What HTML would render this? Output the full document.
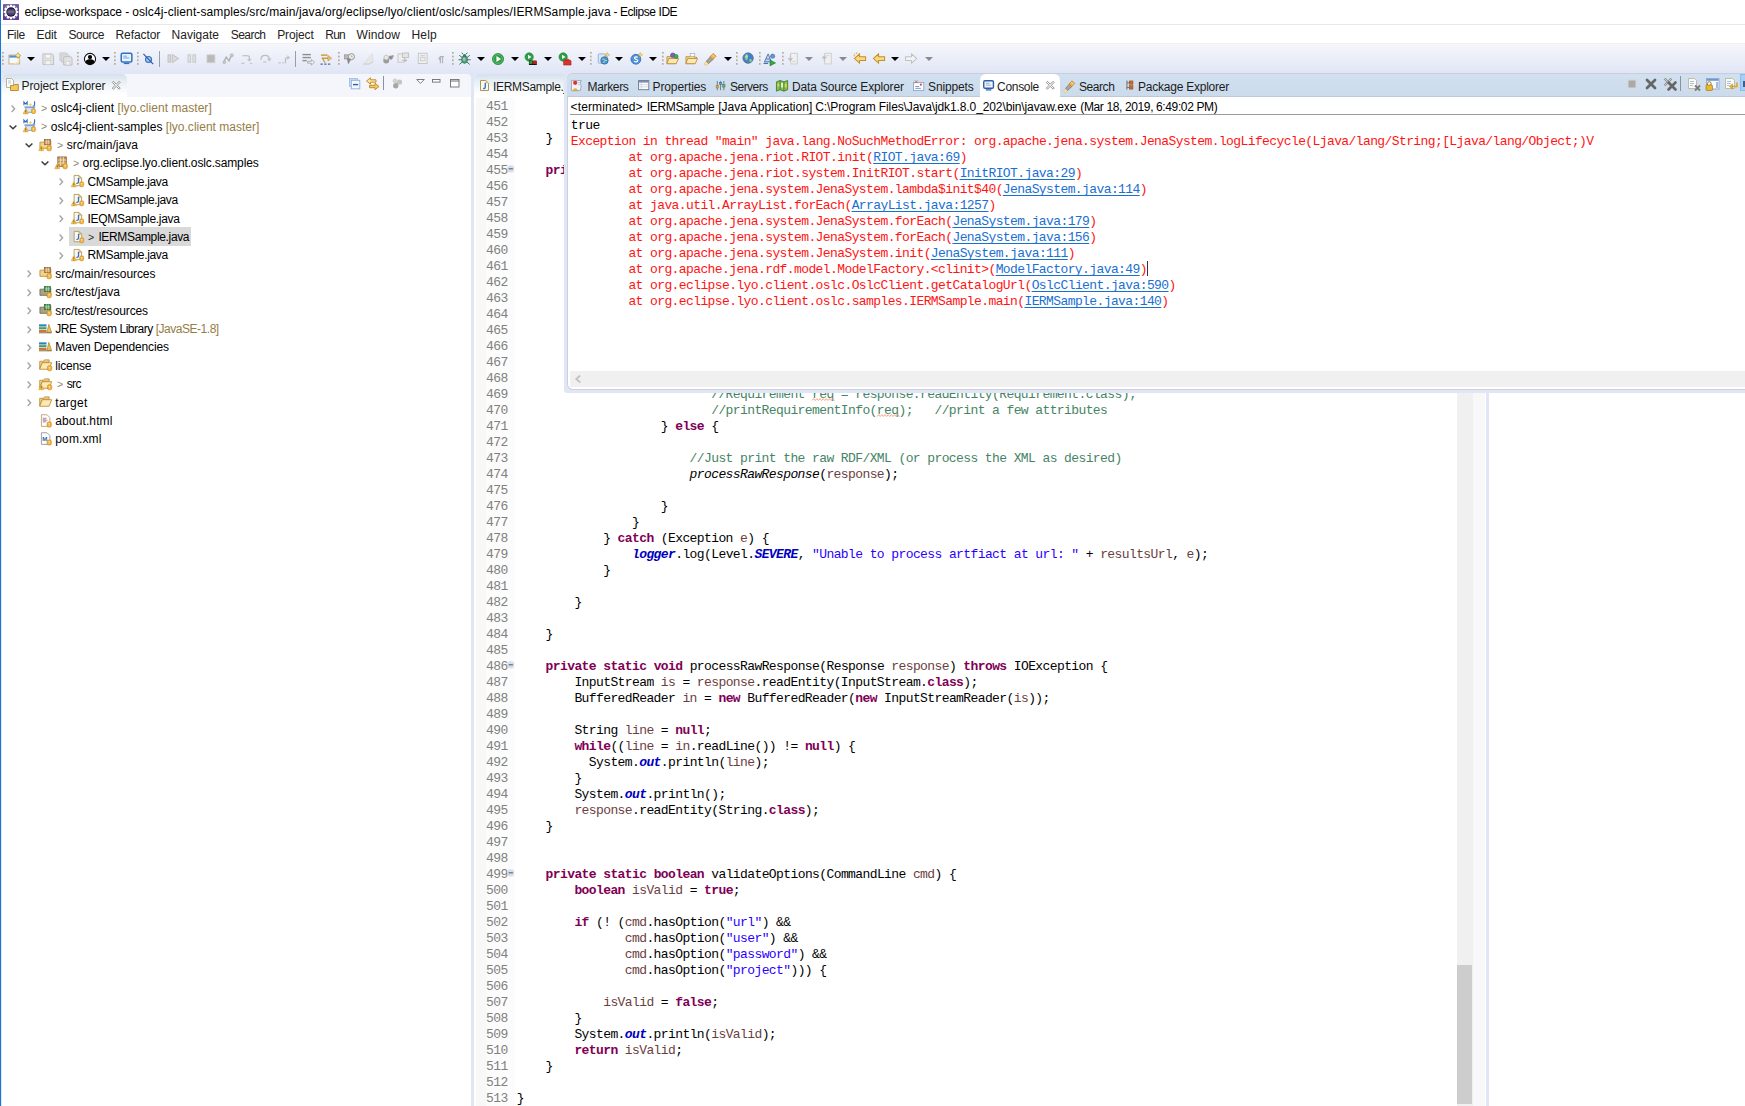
<!DOCTYPE html>
<html><head><meta charset="utf-8"><title>Eclipse IDE</title><style>
html,body{margin:0;padding:0;background:#fff;}
body{width:1745px;height:1106px;overflow:hidden;position:relative;font-family:"Liberation Sans",sans-serif;font-size:12px;color:#000;}
.abs{position:absolute;}
svg{position:absolute;overflow:visible;}
#win{position:absolute;left:0;top:0;width:1745px;height:1106px;overflow:hidden;background:#e1e6f6;}
#lborder{position:absolute;left:0;top:0;width:1px;height:1106px;background:#1677d7;}
#title{position:absolute;left:1px;top:0;width:1744px;height:24px;background:#fff;}
#title .t{position:absolute;font-size:12px;line-height:15px;white-space:pre;}
#menu{position:absolute;left:1px;top:24px;width:1744px;height:19px;background:#fff;border-top:1px solid #e8e8e8;box-sizing:border-box;}
#menu span{position:absolute;top:2.600px;color:#222;font-size:12px;line-height:15px;white-space:pre;}
#tool{position:absolute;left:1px;top:42.500px;width:1744px;height:30.500px;background:linear-gradient(#f5f7fc,#e1e6f6);border-top:1px solid #f0f0f2;box-sizing:border-box;}
.t12{position:absolute;font-size:12px;line-height:15px;white-space:pre;}
.mono{font-family:"Liberation Mono",monospace;font-size:13px;letter-spacing:-0.6px;white-space:pre;line-height:16px;}
.ln{position:absolute;height:16px;}
.kw{color:#7f0055;font-weight:bold;}
.st{color:#2a00ff;}
.cm{color:#468465;}
.lv{color:#6a3e3e;}
.sf{color:#0000c0;font-weight:bold;font-style:italic;}
.it{font-style:italic;}
.lnum{color:#808080;}
.err{color:#ff1414;}
.lk{color:#1a6fd2;text-decoration:underline;text-underline-offset:1.500px;text-decoration-skip-ink:none;text-decoration-thickness:1px;}
.dec{color:#957d47;}
.gt{color:#7b7b7b;}
.sq{text-decoration:underline wavy #e04040;text-decoration-thickness:1px;text-underline-offset:1px;}
</style></head><body>
<div id="win">
<div id="title">
<svg style="left:2px;top:4px" width="16" height="16" viewBox="0 0 16 16">
<defs><linearGradient id="eg" x1="0" y1="0" x2="0" y2="1"><stop offset="0" stop-color="#7d63a8"/><stop offset="0.55" stop-color="#5a3f8a"/><stop offset="1" stop-color="#5e3a98"/></linearGradient><linearGradient id="ec" x1="0" y1="0" x2="0" y2="1"><stop offset="0" stop-color="#2a2440"/><stop offset="0.5" stop-color="#7c7396"/><stop offset="0.62" stop-color="#5a4a86"/><stop offset="1" stop-color="#3a2d5e"/></linearGradient></defs>
<rect x="0" y="0" width="16" height="16" rx=".600" fill="url(#eg)"/>
<g fill="#fbfafc"><circle cx="8" cy="8" r="6"/><g transform="translate(8 8)"><rect x="-1.150" y="-7.300" width="2.300" height="14.600" transform="rotate(0)"/><rect x="-1.150" y="-7.300" width="2.300" height="14.600" transform="rotate(30)"/><rect x="-1.150" y="-7.300" width="2.300" height="14.600" transform="rotate(60)"/><rect x="-1.150" y="-7.300" width="2.300" height="14.600" transform="rotate(90)"/><rect x="-1.150" y="-7.300" width="2.300" height="14.600" transform="rotate(120)"/><rect x="-1.150" y="-7.300" width="2.300" height="14.600" transform="rotate(150)"/></g></g>
<circle cx="8" cy="8" r="4.700" fill="#15121f"/><circle cx="8" cy="8" r="3.800" fill="url(#ec)"/>
</svg>
<span class="t" id="ttlA" style="letter-spacing:-0.069px;left:23.4px;top:4.900px">eclipse-workspace - </span>
<span class="t" id="ttlB" style="letter-spacing:0.112px;left:131.2px;top:4.900px">oslc4j-client-samples/src/main/java/org/eclipse/lyo/client/oslc/samples/IERMSample.java</span>
<span class="t" id="ttlC" style="letter-spacing:-0.435px;left:609.6px;top:4.900px"> - Eclipse IDE</span>
</div>
<div id="menu">
<span id="m0" style="letter-spacing:-0.361px;left:5.9px">File</span>
<span id="m1" style="letter-spacing:-0.122px;left:35.5px">Edit</span>
<span id="m2" style="letter-spacing:-0.422px;left:67.4px">Source</span>
<span id="m3" style="letter-spacing:-0.082px;left:114.5px">Refactor</span>
<span id="m4" style="letter-spacing:0.003px;left:170.6px">Navigate</span>
<span id="m5" style="letter-spacing:-0.539px;left:229.7px">Search</span>
<span id="m6" style="letter-spacing:-0.137px;left:276.2px">Project</span>
<span id="m7" style="letter-spacing:-0.805px;left:324.3px">Run</span>
<span id="m8" style="letter-spacing:0.119px;left:355.6px">Window</span>
<span id="m9" style="letter-spacing:0.103px;left:410.6px">Help</span>
</div>
<div id="tool"></div>
<svg style="left:1.7px;top:52.3px" width="2" height="14" viewBox="0 0 2 14"><rect x="0" y="0.0" width="1.700" height="1.700" fill="#b0aa96"/><rect x="0.800" y="0.8" width=".900" height=".900" fill="#d8d3c2"/><rect x="0" y="3.7" width="1.700" height="1.700" fill="#b0aa96"/><rect x="0.800" y="4.5" width=".900" height=".900" fill="#d8d3c2"/><rect x="0" y="7.4" width="1.700" height="1.700" fill="#b0aa96"/><rect x="0.800" y="8.2" width=".900" height=".900" fill="#d8d3c2"/><rect x="0" y="11.1" width="1.700" height="1.700" fill="#b0aa96"/><rect x="0.800" y="11.9" width=".900" height=".900" fill="#d8d3c2"/></svg>
<svg style="left:8px;top:51.7px" width="14" height="14" viewBox="0 0 14 14"><g transform="translate(0.5 0.5) scale(0.93)"><rect x="0.500" y="2.800" width="11.500" height="9.500" fill="#f4f9fe" stroke="#c5a75e" stroke-width=".9"/><rect x="0.900" y="3.200" width="10.700" height="2.300" fill="#4f8fd6"/><path d="M6 11.800q5-.5 5.500-5" fill="none" stroke="#f6e6a8" stroke-width="1.200"/><path d="M10.200 0l1.100 2.100 2.100 1.100-2.100 1.100-1.100 2.100-1.100-2.100-2.100-1.100 2.100-1.100z" fill="#fbe69a" stroke="#c49a2c" stroke-width=".7"/></g></svg>
<svg style="left:26.7px;top:56.7px" width="8" height="4" viewBox="0 0 8 4"><path d="M0 0h8l-4 4z" fill="#000"/></svg>
<svg style="left:41px;top:51.7px" width="14" height="14" viewBox="0 0 14 14"><g transform="translate(0.5 0.5) scale(0.93)"><path d="M1.5 1.5h10l1.5 1.5v10h-11.5z" fill="#e2e2e2" stroke="#bdbdbd"/><rect x="4" y="2" width="5.5" height="4" fill="#f6f6f6" stroke="#c6c6c6" stroke-width=".6"/><rect x="4" y="8.5" width="6" height="4.5" fill="#f2f2f2" stroke="#c6c6c6" stroke-width=".6"/></g></svg>
<svg style="left:59px;top:51.7px" width="14" height="14" viewBox="0 0 14 14"><g transform="translate(0.5 0.5) scale(0.93)"><path d="M0.5 0.5h7l1 1v7h-8z" fill="#e6e6e6" stroke="#c4c4c4"/><path d="M2.5 2.5h7l1 1v7h-8z" fill="#e6e6e6" stroke="#c4c4c4"/><path d="M4.5 4.5h7.5l1.5 1.5v7.5h-9z" fill="#e2e2e2" stroke="#bdbdbd"/><rect x="7" y="9.5" width="4" height="4" fill="#f4f4f4" stroke="#c6c6c6" stroke-width=".6"/></g></svg>
<svg style="left:76.7px;top:52.3px" width="2" height="14" viewBox="0 0 2 14"><rect x="0" y="0.0" width="1.700" height="1.700" fill="#b0aa96"/><rect x="0.800" y="0.8" width=".900" height=".900" fill="#d8d3c2"/><rect x="0" y="3.7" width="1.700" height="1.700" fill="#b0aa96"/><rect x="0.800" y="4.5" width=".900" height=".900" fill="#d8d3c2"/><rect x="0" y="7.4" width="1.700" height="1.700" fill="#b0aa96"/><rect x="0.800" y="8.2" width=".900" height=".900" fill="#d8d3c2"/><rect x="0" y="11.1" width="1.700" height="1.700" fill="#b0aa96"/><rect x="0.800" y="11.9" width=".900" height=".900" fill="#d8d3c2"/></svg>
<svg style="left:83px;top:51.7px" width="14" height="14" viewBox="0 0 14 14"><g transform="translate(0.5 0.5) scale(0.93)"><circle cx="7" cy="7" r="6" fill="#fff" stroke="#111" stroke-width="1.200"/><circle cx="7" cy="4.900" r="2.300" fill="#050505"/><path d="M2 10.300C2.800 7.700 5 7.300 7 7.300S11.200 7.700 12 10.300A6 6 0 0 1 2 10.300z" fill="#050505"/></g></svg>
<svg style="left:101.7px;top:56.7px" width="8" height="4" viewBox="0 0 8 4"><path d="M0 0h8l-4 4z" fill="#000"/></svg>
<svg style="left:113.7px;top:52.3px" width="2" height="14" viewBox="0 0 2 14"><rect x="0" y="0.0" width="1.700" height="1.700" fill="#b0aa96"/><rect x="0.800" y="0.8" width=".900" height=".900" fill="#d8d3c2"/><rect x="0" y="3.7" width="1.700" height="1.700" fill="#b0aa96"/><rect x="0.800" y="4.5" width=".900" height=".900" fill="#d8d3c2"/><rect x="0" y="7.4" width="1.700" height="1.700" fill="#b0aa96"/><rect x="0.800" y="8.2" width=".900" height=".900" fill="#d8d3c2"/><rect x="0" y="11.1" width="1.700" height="1.700" fill="#b0aa96"/><rect x="0.800" y="11.9" width=".900" height=".900" fill="#d8d3c2"/></svg>
<svg style="left:120px;top:51.7px" width="14" height="14" viewBox="0 0 14 14"><g transform="translate(0.5 0.5) scale(0.93)"><rect x="0.8" y="0.8" width="11.4" height="9.4" rx="1.4" fill="#eaf2fb" stroke="#2f6fc1" stroke-width="1.6"/><rect x="3" y="3.4" width="4" height="1" fill="#6f9bd4"/><rect x="3" y="5.4" width="6.5" height="1" fill="#6f9bd4"/><rect x="3.5" y="11.2" width="6" height="1.3" fill="#2f6fc1"/></g></svg>
<svg style="left:136.7px;top:52.3px" width="2" height="14" viewBox="0 0 2 14"><rect x="0" y="0.0" width="1.700" height="1.700" fill="#b0aa96"/><rect x="0.800" y="0.8" width=".900" height=".900" fill="#d8d3c2"/><rect x="0" y="3.7" width="1.700" height="1.700" fill="#b0aa96"/><rect x="0.800" y="4.5" width=".900" height=".900" fill="#d8d3c2"/><rect x="0" y="7.4" width="1.700" height="1.700" fill="#b0aa96"/><rect x="0.800" y="8.2" width=".900" height=".900" fill="#d8d3c2"/><rect x="0" y="11.1" width="1.700" height="1.700" fill="#b0aa96"/><rect x="0.800" y="11.9" width=".900" height=".900" fill="#d8d3c2"/></svg>
<svg style="left:142px;top:51.7px" width="14" height="14" viewBox="0 0 14 14"><g transform="translate(0.5 0.5) scale(0.93)"><circle cx="6.5" cy="7.5" r="3.2" fill="#aecbee" stroke="#3a74c4" stroke-width="1.3"/><path d="M1 1.5l10.5 11" stroke="#3560b0" stroke-width="1.4"/></g></svg>
<div class="abs" style="left:159px;top:51px;width:1px;height:16px;background:#9b9da3"></div>
<svg style="left:167px;top:51.7px" width="14" height="14" viewBox="0 0 14 14"><g transform="translate(0.5 0.5) scale(0.93)"><rect x="0.5" y="2.5" width="2.6" height="8" fill="#d6d6d6" stroke="#bdbdbd" stroke-width=".8"/><path d="M5 2l7 4.500-7 4.500z" fill="#dcdcdc" stroke="#b8b8b8" stroke-width=".9"/></g></svg>
<svg style="left:187px;top:51.7px" width="14" height="14" viewBox="0 0 14 14"><g transform="translate(0.5 0.5) scale(0.93)"><rect x="0.5" y="2.5" width="3" height="8" fill="#e0e0e0" stroke="#c0c0c0" stroke-width=".8"/><rect x="5.800" y="2.5" width="3" height="8" fill="#e0e0e0" stroke="#c0c0c0" stroke-width=".8"/></g></svg>
<svg style="left:206px;top:51.7px" width="14" height="14" viewBox="0 0 14 14"><g transform="translate(0.5 0.5) scale(0.93)"><rect x="0.5" y="2.5" width="8.5" height="8.5" fill="#b9b9b9" stroke="#d0d0d0" stroke-width="1"/></g></svg>
<svg style="left:222px;top:51.7px" width="14" height="14" viewBox="0 0 14 14"><g transform="translate(0.5 0.5) scale(0.93)"><path d="M1 11l3-6 3 4 3-7" fill="none" stroke="#b0b0b0" stroke-width="1.5"/><circle cx="10" cy="3" r="1.700" fill="#c9c9c9" stroke="#a8a8a8" stroke-width=".6"/><circle cx="2" cy="10.5" r="1.5" fill="#c9c9c9" stroke="#a8a8a8" stroke-width=".6"/></g></svg>
<svg style="left:241px;top:51.7px" width="14" height="14" viewBox="0 0 14 14"><g transform="translate(0.5 0.5) scale(0.93)"><path d="M1 3.500h5.500q2 0 2 2v2" fill="none" stroke="#b7b7b7" stroke-width="1.3"/><path d="M6 7l2.500 3 2.500-3z" fill="#c4c4c4"/><rect x="0" y="11" width="3" height="1.200" fill="#bdbdbd"/><rect x="9" y="11.200" width="2.500" height="1.200" fill="#c8c8c8"/></g></svg>
<svg style="left:259px;top:51.7px" width="14" height="14" viewBox="0 0 14 14"><g transform="translate(0.5 0.5) scale(0.93)"><path d="M1.500 8q0-5 4.500-5t4.500 4" fill="none" stroke="#bcbcbc" stroke-width="1.300"/><path d="M8 6.500l2.600 3.200 2.400-3.200z" fill="#c4c4c4"/><rect x="4" y="9.500" width="3.500" height="1.400" fill="#c6c6c6"/></g></svg>
<svg style="left:278px;top:51.7px" width="14" height="14" viewBox="0 0 14 14"><g transform="translate(0.5 0.5) scale(0.93)"><rect x="0" y="10.500" width="2.500" height="1.300" fill="#c3c3c3"/><rect x="4" y="10.500" width="2" height="1.300" fill="#c9c9c9"/><path d="M7.500 11.500v-4q0-2 2-2h1" fill="none" stroke="#bcbcbc" stroke-width="1.300"/><path d="M9.500 3l3 2.500-3 2.500z" fill="#c4c4c4"/></g></svg>
<div class="abs" style="left:295px;top:51px;width:1px;height:16px;background:#9b9da3"></div>
<svg style="left:302px;top:51.7px" width="14" height="14" viewBox="0 0 14 14"><g transform="translate(0.5 0.5) scale(0.93)"><rect x="0" y="1.500" width="9" height="1.500" fill="#8e8e8e"/><rect x="0" y="4.700" width="9" height="1.500" fill="#8e8e8e"/><rect x="0" y="8" width="4.500" height="1.500" fill="#8e8e8e"/><path d="M5.500 9.500h4v-2l3.500 3-3.500 3v-2h-4z" fill="#f4f4f4" stroke="#9a9a9a" stroke-width=".8"/></g></svg>
<svg style="left:320px;top:51.7px" width="14" height="14" viewBox="0 0 14 14"><g transform="translate(0.5 0.5) scale(0.93)"><path d="M0.500 2.800h7" stroke="#c69a36" stroke-width="1.500"/><path d="M2 6.200h7" stroke="#c69a36" stroke-width="1.500"/><path d="M8 3.200l4 3-4 3z" fill="#f0c95f" stroke="#b98a27" stroke-width=".6"/><path d="M1.500 5.500l3.500 5.500" stroke="#c69a36" stroke-width="1.300"/><path d="M0 12.500h2.500M4 12.500h2.500M8 12.500h2.500" stroke="#3b6fb8" stroke-width="1.300"/></g></svg>
<svg style="left:337.7px;top:52.3px" width="2" height="14" viewBox="0 0 2 14"><rect x="0" y="0.0" width="1.700" height="1.700" fill="#b0aa96"/><rect x="0.800" y="0.8" width=".900" height=".900" fill="#d8d3c2"/><rect x="0" y="3.7" width="1.700" height="1.700" fill="#b0aa96"/><rect x="0.800" y="4.5" width=".900" height=".900" fill="#d8d3c2"/><rect x="0" y="7.4" width="1.700" height="1.700" fill="#b0aa96"/><rect x="0.800" y="8.2" width=".900" height=".900" fill="#d8d3c2"/><rect x="0" y="11.1" width="1.700" height="1.700" fill="#b0aa96"/><rect x="0.800" y="11.9" width=".900" height=".900" fill="#d8d3c2"/></svg>
<svg style="left:343px;top:51.7px" width="14" height="14" viewBox="0 0 14 14"><g transform="translate(0.5 0.5) scale(0.93)"><rect x="1" y="2.500" width="5" height="4.500" fill="#b9b9b9" stroke="#8f8f8f" stroke-width=".7"/><circle cx="8.500" cy="4.500" r="3.300" fill="#ececec" stroke="#8f8f8f" stroke-width="1"/><path d="M8.500 3v1.700h1.500" stroke="#9a9a9a" stroke-width=".7" fill="none"/><path d="M3.500 6l5 1-3.500 6z" fill="#8a8a8a"/></g></svg>
<svg style="left:362px;top:51.7px" width="14" height="14" viewBox="0 0 14 14"><g transform="translate(0.5 0.5) scale(0.93)"><path d="M1 12.500l9.500-11.500 1 9-4.500 2.500z" fill="#e6e6e6" stroke="#d6d6d6" stroke-width=".6"/><path d="M1 12.500l6 0 4.500-2.500" fill="none" stroke="#c9c9c9" stroke-width=".8"/></g></svg>
<svg style="left:382px;top:51.7px" width="14" height="14" viewBox="0 0 14 14"><g transform="translate(0.5 0.5) scale(0.93)"><circle cx="4" cy="8.500" r="3.200" fill="#9c9c9c"/><circle cx="4" cy="5.500" r="2.500" fill="#e8e8e8" stroke="#a8a8a8" stroke-width=".6"/><circle cx="9" cy="5.500" r="2.200" fill="#8f8f8f"/><circle cx="11" cy="4" r="1.200" fill="#a5a5a5"/></g></svg>
<svg style="left:397px;top:51.7px" width="14" height="14" viewBox="0 0 14 14"><g transform="translate(0.5 0.5) scale(0.93)"><rect x="0.500" y="1.500" width="7" height="9" fill="#ececec" stroke="#c2c2c2" stroke-width=".9"/><rect x="5.500" y="0.500" width="6.500" height="5" fill="#e3e3e3" stroke="#bdbdbd" stroke-width=".9"/><path d="M5 8.500h5l-1.500-1.500m1.500 1.500l-1.500 1.500" stroke="#b5b5b5" fill="none" stroke-width="1"/></g></svg>
<svg style="left:417px;top:51.7px" width="14" height="14" viewBox="0 0 14 14"><g transform="translate(0.5 0.5) scale(0.93)"><rect x="0.800" y="0.800" width="9.500" height="11" fill="#efefef" stroke="#c4c4c4" stroke-width="1"/><rect x="3" y="3" width="5" height="1" fill="#c8c8c8"/><rect x="3" y="5.300" width="5" height="3.500" fill="none" stroke="#c8c8c8" stroke-width=".8"/></g></svg>
<svg style="left:436px;top:51.7px" width="14" height="14" viewBox="0 0 14 14"><g transform="translate(0.5 0.5) scale(0.93)"><path d="M6.500 4.500v7M4.200 4.500v7M8 4.500h-4.500" fill="none" stroke="#b4b4b4" stroke-width="1.300"/><path d="M4.200 4.500a2 2 0 000 4z" fill="#b4b4b4"/></g></svg>
<svg style="left:451.7px;top:52.3px" width="2" height="14" viewBox="0 0 2 14"><rect x="0" y="0.0" width="1.700" height="1.700" fill="#b0aa96"/><rect x="0.800" y="0.8" width=".900" height=".900" fill="#d8d3c2"/><rect x="0" y="3.7" width="1.700" height="1.700" fill="#b0aa96"/><rect x="0.800" y="4.5" width=".900" height=".900" fill="#d8d3c2"/><rect x="0" y="7.4" width="1.700" height="1.700" fill="#b0aa96"/><rect x="0.800" y="8.2" width=".900" height=".900" fill="#d8d3c2"/><rect x="0" y="11.1" width="1.700" height="1.700" fill="#b0aa96"/><rect x="0.800" y="11.9" width=".900" height=".900" fill="#d8d3c2"/></svg>
<svg style="left:458px;top:51.7px" width="14" height="14" viewBox="0 0 14 14"><g transform="translate(0.5 0.5) scale(0.93)"><path d="M3.800 5.300l-3-2.300M3.500 7.800h-3.500M3.900 10.300l-2.900 2.500M9.200 5.300l3-2.300M9.500 7.800h3.500M9.100 10.300l2.900 2.500M5 2l-1.500-1.800M8 2l1.500-1.800" stroke="#2d6b58" stroke-width="1" fill="none"/><ellipse cx="6.500" cy="7.600" rx="3.100" ry="4" fill="#5aa585" stroke="#2d6b58" stroke-width=".9"/><ellipse cx="6" cy="7" rx="1.400" ry="2" fill="#a8d8b8" opacity=".8"/><circle cx="6.500" cy="3.300" r="1.700" fill="#3a7c66"/></g></svg>
<svg style="left:476.7px;top:56.7px" width="8" height="4" viewBox="0 0 8 4"><path d="M0 0h8l-4 4z" fill="#000"/></svg>
<svg style="left:491px;top:51.7px" width="14" height="14" viewBox="0 0 14 14"><g transform="translate(0.5 0.5) scale(0.93)"><circle cx="7" cy="7" r="6" fill="#2f9f46" stroke="#1d7a31" stroke-width=".7"/><circle cx="7" cy="7" r="4.800" fill="none" stroke="#7ad38a" stroke-width=".8" opacity=".7"/><path d="M5.300 3.800l5 3.200-5 3.200z" fill="#fff"/></g></svg>
<svg style="left:510.7px;top:56.7px" width="8" height="4" viewBox="0 0 8 4"><path d="M0 0h8l-4 4z" fill="#000"/></svg>
<svg style="left:524px;top:51.7px" width="14" height="14" viewBox="0 0 14 14"><g transform="translate(0.5 0.5) scale(0.93)"><circle cx="5" cy="4.800" r="4.500" fill="#2c9e44" stroke="#1d7a31" stroke-width=".6"/><path d="M3.800 2.500l3.700 2.300-3.700 2.300z" fill="#fff"/><rect x="5" y="9" width="4" height="3.500" fill="#2fa23c" stroke="#111" stroke-width=".5"/><rect x="9" y="9" width="4" height="3.500" fill="#d6201f" stroke="#111" stroke-width=".5"/><rect x="4.800" y="12.300" width="8.400" height="1.100" fill="#111"/></g></svg>
<svg style="left:543.7px;top:56.7px" width="8" height="4" viewBox="0 0 8 4"><path d="M0 0h8l-4 4z" fill="#000"/></svg>
<svg style="left:558px;top:51.7px" width="14" height="14" viewBox="0 0 14 14"><g transform="translate(0.5 0.5) scale(0.93)"><circle cx="5" cy="4.800" r="4.500" fill="#2c9e44" stroke="#1d7a31" stroke-width=".6"/><path d="M3.800 2.500l3.700 2.300-3.700 2.300z" fill="#fff"/><path d="M6.500 8h6l1 1.200v4.300h-8v-4.300z" fill="#d9332e" stroke="#a31e1a" stroke-width=".6"/><rect x="8.300" y="7" width="2.600" height="1.400" fill="#e65a50" stroke="#a31e1a" stroke-width=".5"/></g></svg>
<svg style="left:577.7px;top:56.7px" width="8" height="4" viewBox="0 0 8 4"><path d="M0 0h8l-4 4z" fill="#000"/></svg>
<svg style="left:589.7px;top:52.3px" width="2" height="14" viewBox="0 0 2 14"><rect x="0" y="0.0" width="1.700" height="1.700" fill="#b0aa96"/><rect x="0.800" y="0.8" width=".900" height=".900" fill="#d8d3c2"/><rect x="0" y="3.7" width="1.700" height="1.700" fill="#b0aa96"/><rect x="0.800" y="4.5" width=".900" height=".900" fill="#d8d3c2"/><rect x="0" y="7.4" width="1.700" height="1.700" fill="#b0aa96"/><rect x="0.800" y="8.2" width=".900" height=".900" fill="#d8d3c2"/><rect x="0" y="11.1" width="1.700" height="1.700" fill="#b0aa96"/><rect x="0.800" y="11.9" width=".900" height=".900" fill="#d8d3c2"/></svg>
<svg style="left:597px;top:51.7px" width="14" height="14" viewBox="0 0 14 14"><g transform="translate(0.5 0.5) scale(0.93)"><rect x="0.800" y="1.500" width="8" height="10" rx="1" fill="#dbe6f5" stroke="#8ea6cb" stroke-width=".9"/><circle cx="7.500" cy="8.500" r="4" fill="#4a8fd3" stroke="#2b5fa8" stroke-width=".7"/><path d="M5 7.500c1-1 2-.5 2.500.5s1.500 1 2.500.3M6 11c.5-1 1.500-1 2-.3" stroke="#9fe09a" stroke-width="1.100" fill="none"/><path d="M10.500 0l.8 1.700 1.700.8-1.700.8-.8 1.700-.8-1.700-1.700-.8 1.700-.8z" fill="#f8dc7a" stroke="#c49a2c" stroke-width=".5"/></g></svg>
<svg style="left:614.7px;top:56.7px" width="8" height="4" viewBox="0 0 8 4"><path d="M0 0h8l-4 4z" fill="#000"/></svg>
<svg style="left:630px;top:51.7px" width="14" height="14" viewBox="0 0 14 14"><g transform="translate(0.5 0.5) scale(0.93)"><circle cx="5.800" cy="7.300" r="5.300" fill="#4f93d8" stroke="#2d64ad" stroke-width=".8"/><path d="M7.800 5.300c-.8-.9-3.500-.9-3.500.6s3.500 1.300 3.500 2.900-2.900 1.600-3.800.5" fill="none" stroke="#fff" stroke-width="1.300"/><path d="M10.500 0l.8 1.700 1.700.8-1.700.8-.8 1.700-.8-1.700-1.700-.8 1.700-.8z" fill="#f8dc7a" stroke="#c49a2c" stroke-width=".5"/></g></svg>
<svg style="left:648.7px;top:56.7px" width="8" height="4" viewBox="0 0 8 4"><path d="M0 0h8l-4 4z" fill="#000"/></svg>
<svg style="left:661.7px;top:52.3px" width="2" height="14" viewBox="0 0 2 14"><rect x="0" y="0.0" width="1.700" height="1.700" fill="#b0aa96"/><rect x="0.800" y="0.8" width=".900" height=".900" fill="#d8d3c2"/><rect x="0" y="3.7" width="1.700" height="1.700" fill="#b0aa96"/><rect x="0.800" y="4.5" width=".900" height=".900" fill="#d8d3c2"/><rect x="0" y="7.4" width="1.700" height="1.700" fill="#b0aa96"/><rect x="0.800" y="8.2" width=".900" height=".900" fill="#d8d3c2"/><rect x="0" y="11.1" width="1.700" height="1.700" fill="#b0aa96"/><rect x="0.800" y="11.9" width=".900" height=".900" fill="#d8d3c2"/></svg>
<svg style="left:666px;top:51.7px" width="14" height="14" viewBox="0 0 14 14"><g transform="translate(0.5 0.5) scale(0.93)"><path d="M0.500 4.500h4l1-1.500h4v2h2.500l-2 7h-9.500z" fill="#f6d78b" stroke="#b98a32" stroke-width=".9"/><path d="M2.500 6.500h10.500l-2.500 5.500h-10z" fill="#fbe9b5" stroke="#b98a32" stroke-width=".9"/><circle cx="6.800" cy="3" r="2.500" fill="#7a63b8" stroke="#4c3a88" stroke-width=".6"/><circle cx="10.300" cy="4.200" r="2.200" fill="#4aa35a" stroke="#2b7a3b" stroke-width=".5"/></g></svg>
<svg style="left:685px;top:51.7px" width="14" height="14" viewBox="0 0 14 14"><g transform="translate(0.5 0.5) scale(0.93)"><path d="M0.500 4.500h4l1-1.500h4v2h2.500l-2 7h-9.500z" fill="#f6d78b" stroke="#b98a32" stroke-width=".9"/><path d="M2.500 6.500h10.500l-2.500 5.500h-10z" fill="#fbe9b5" stroke="#b98a32" stroke-width=".9"/><rect x="5" y="1" width="5" height="3" fill="#fff" stroke="#9a9a9a" stroke-width=".6"/></g></svg>
<svg style="left:703px;top:51.7px" width="14" height="14" viewBox="0 0 14 14"><g transform="translate(0.5 0.5) scale(0.93)"><path d="M0.500 12.500l3-3 2 2-3 2.500z" fill="#fbe7a6" stroke="#e0b64e" stroke-width=".6"/><path d="M3 9.500l4.500-5 3 2.800-5 4.500z" fill="#a9a39a" stroke="#7c756b" stroke-width=".8"/><path d="M7 4.500l3.500-3.500 3 3-3.500 3.500z" fill="#f3b54a" stroke="#b9822a" stroke-width=".8"/><path d="M9.500 2.500l2.500 2.500" stroke="#fbe2a0" stroke-width="1"/></g></svg>
<svg style="left:723.7px;top:56.7px" width="8" height="4" viewBox="0 0 8 4"><path d="M0 0h8l-4 4z" fill="#000"/></svg>
<svg style="left:735.7px;top:52.3px" width="2" height="14" viewBox="0 0 2 14"><rect x="0" y="0.0" width="1.700" height="1.700" fill="#b0aa96"/><rect x="0.800" y="0.8" width=".900" height=".900" fill="#d8d3c2"/><rect x="0" y="3.7" width="1.700" height="1.700" fill="#b0aa96"/><rect x="0.800" y="4.5" width=".900" height=".900" fill="#d8d3c2"/><rect x="0" y="7.4" width="1.700" height="1.700" fill="#b0aa96"/><rect x="0.800" y="8.2" width=".900" height=".900" fill="#d8d3c2"/><rect x="0" y="11.1" width="1.700" height="1.700" fill="#b0aa96"/><rect x="0.800" y="11.9" width=".900" height=".900" fill="#d8d3c2"/></svg>
<svg style="left:742px;top:51.7px" width="14" height="14" viewBox="0 0 14 14"><g transform="translate(0.5 0.5) scale(0.93)"><circle cx="6" cy="6" r="5.600" fill="#3f7fcb" stroke="#5d6f8f" stroke-width=".9"/><path d="M2.500 4c1.500-1.500 3-1 3.500.5s-1 2-1 3.500-1.500 0-2-1-1-2-.5-3zM7.500 7.500c1-.8 2.300-.3 2.500.8s-1 2-2 1.700-.9-1.800-.5-2.500z" fill="#8fd07e"/><circle cx="4.500" cy="3.500" r="1.500" fill="#fff" opacity=".45"/></g></svg>
<svg style="left:758.7px;top:52.3px" width="2" height="14" viewBox="0 0 2 14"><rect x="0" y="0.0" width="1.700" height="1.700" fill="#b0aa96"/><rect x="0.800" y="0.8" width=".900" height=".900" fill="#d8d3c2"/><rect x="0" y="3.7" width="1.700" height="1.700" fill="#b0aa96"/><rect x="0.800" y="4.5" width=".900" height=".900" fill="#d8d3c2"/><rect x="0" y="7.4" width="1.700" height="1.700" fill="#b0aa96"/><rect x="0.800" y="8.2" width=".900" height=".900" fill="#d8d3c2"/><rect x="0" y="11.1" width="1.700" height="1.700" fill="#b0aa96"/><rect x="0.800" y="11.9" width=".900" height=".900" fill="#d8d3c2"/></svg>
<svg style="left:763px;top:51.7px" width="14" height="14" viewBox="0 0 14 14"><g transform="translate(0.5 0.5) scale(0.93)"><path d="M1 10l4-8.500 3.500 8.500z" fill="#c7d8ee" stroke="#4e74ad" stroke-width="1"/><path d="M3 7h4" stroke="#4e74ad" stroke-width="1"/><circle cx="9.800" cy="4" r="2.300" fill="#6f93c9" stroke="#3f64a0" stroke-width=".6"/><path d="M7 8l6 3.200-6 3.200z" fill="#2fa84a" stroke="#1c7a31" stroke-width=".6"/><rect x="0" y="11" width="5" height="1.400" fill="#4e74ad"/></g></svg>
<svg style="left:781.7px;top:52.3px" width="2" height="14" viewBox="0 0 2 14"><rect x="0" y="0.0" width="1.700" height="1.700" fill="#b0aa96"/><rect x="0.800" y="0.8" width=".900" height=".900" fill="#d8d3c2"/><rect x="0" y="3.7" width="1.700" height="1.700" fill="#b0aa96"/><rect x="0.800" y="4.5" width=".900" height=".900" fill="#d8d3c2"/><rect x="0" y="7.4" width="1.700" height="1.700" fill="#b0aa96"/><rect x="0.800" y="8.2" width=".900" height=".900" fill="#d8d3c2"/><rect x="0" y="11.1" width="1.700" height="1.700" fill="#b0aa96"/><rect x="0.800" y="11.9" width=".900" height=".900" fill="#d8d3c2"/></svg>
<svg style="left:787px;top:51.7px" width="14" height="14" viewBox="0 0 14 14"><g transform="translate(0.5 0.5) scale(0.93)"><rect x="3.500" y="0.800" width="7" height="11.500" fill="#f0f0f0" stroke="#c9c9c9" stroke-width=".9"/><path d="M3 3v5.500M0.800 6.500l2.200 2.700 2.200-2.700z" fill="#cfcfcf" stroke="#bdbdbd" stroke-width=".9"/><rect x="5" y="9" width="4" height="1" fill="#d2d2d2"/></g></svg>
<svg style="left:804.7px;top:56.7px" width="8" height="4" viewBox="0 0 8 4"><path d="M0 0h8l-4 4z" fill="#8a8a8a"/></svg>
<svg style="left:821px;top:51.7px" width="14" height="14" viewBox="0 0 14 14"><g transform="translate(0.5 0.5) scale(0.93)"><rect x="3.500" y="0.800" width="7" height="11.500" fill="#f0f0f0" stroke="#c9c9c9" stroke-width=".9"/><path d="M3 9.500v-5.500M0.800 6l2.200-2.700 2.200 2.700z" fill="#cfcfcf" stroke="#bdbdbd" stroke-width=".9"/><rect x="5" y="3" width="4" height="1" fill="#d2d2d2"/></g></svg>
<svg style="left:838.7px;top:56.7px" width="8" height="4" viewBox="0 0 8 4"><path d="M0 0h8l-4 4z" fill="#8a8a8a"/></svg>
<svg style="left:853px;top:51.7px" width="14" height="14" viewBox="0 0 14 14"><g transform="translate(0.5 0.5) scale(0.93)"><path d="M6.500 1.500l-5.500 5 5.500 5v-3h6.500v-4h-6.500z" fill="#f9da7c" stroke="#c4902c" stroke-width="1.100"/><path d="M1 1l1 1M3.500 0v1.500M0 3.500h1.500" stroke="#c4902c" stroke-width=".9"/></g></svg>
<svg style="left:872px;top:51.7px" width="14" height="14" viewBox="0 0 14 14"><g transform="translate(0.5 0.5) scale(0.93)"><path d="M6.500 1.500l-5.500 5 5.500 5v-3h6.500v-4h-6.500z" fill="#f9da7c" stroke="#c4902c" stroke-width="1.100"/></g></svg>
<svg style="left:890.7px;top:56.7px" width="8" height="4" viewBox="0 0 8 4"><path d="M0 0h8l-4 4z" fill="#000"/></svg>
<svg style="left:905px;top:51.7px" width="14" height="14" viewBox="0 0 14 14"><g transform="translate(0.5 0.5) scale(0.93)"><path d="M6.500 1.500l5.500 5-5.500 5v-3h-6.500v-4h6.500z" fill="#f3f3f3" stroke="#c2c2c2" stroke-width="1.100"/></g></svg>
<svg style="left:924.7px;top:56.7px" width="8" height="4" viewBox="0 0 8 4"><path d="M0 0h8l-4 4z" fill="#8a8a8a"/></svg>
<div class="abs" style="left:2px;top:73.500px;width:469px;height:1040px;background:#fff;border-radius:5px 5px 0 0;"></div>
<div class="abs" style="left:2px;top:73.500px;width:469px;height:23.500px;background:#f5f6fb;border-radius:5px 5px 0 0;"></div>
<div class="abs" style="left:2px;top:73.500px;width:124.500px;height:23.500px;background:linear-gradient(#d5e1ed,#e6edf4 30%,#f6f9fb 65%,#fff 95%);border-radius:5px 5px 0 0;"></div>
<svg style="left:6px;top:78px" width="14" height="14" viewBox="0 0 14 14"><path d="M0.500 0.500h5l2 2v7h-7z" fill="#fdfdf9" stroke="#a6a18c" stroke-width=".8"/><path d="M2 3h3M2 5h3" stroke="#8fb0dc" stroke-width=".7"/><path d="M4.500 7.500h3l.8-1h4v6h-7.800z" fill="#f3c95c" stroke="#b8862a" stroke-width=".9"/></svg>
<span class="t12" id="pe" style="letter-spacing:-0.086px;left:21.500px;top:79.300px;color:#1c1c1c">Project Explorer</span>
<svg style="left:111.8px;top:81px" width="9" height="9" viewBox="0 0 9 9"><path d="M1.400 .300L4.250 3.150 7.100 .300 8.200 1.400 5.350 4.250 8.200 7.100 7.100 8.200 4.250 5.350 1.400 8.200 .300 7.100 3.150 4.250 .300 1.400z" fill="#fff" stroke="#858585" stroke-width=".9" stroke-linejoin="round"/></svg>
<svg style="left:349px;top:78px" width="12" height="12" viewBox="0 0 12 12"><rect x="0.500" y="0.500" width="8" height="8" fill="#c9dcf3" stroke="#9fbbe0" stroke-width=".8"/><rect x="2.300" y="2.300" width="8.500" height="8.500" fill="#f4f8fd" stroke="#8fb0dc" stroke-width=".9"/><path d="M4 6.600h5.200" stroke="#2c62a8" stroke-width="1.400"/></svg>
<svg style="left:366px;top:77px" width="14" height="14" viewBox="0 0 14 14"><path d="M4.500 0.800l-4 3.200 4 3.200v-2h5.500v-2.400h-5.500z" fill="#fbe6a2" stroke="#c4902c" stroke-width="1"/><path d="M9 6.300l4 3.200-4 3.200v-2h-5.500v-2.400h5.500z" fill="#f6c85a" stroke="#c4902c" stroke-width="1"/></svg>
<div class="abs" style="left:383px;top:76px;width:1px;height:14px;background:#8f9198"></div>
<svg style="left:392px;top:78px" width="12" height="12" viewBox="0 0 12 12"><circle cx="3" cy="3" r="2.400" fill="#d2d2d2"/><circle cx="7.500" cy="4" r="2.600" fill="#c4c4c4"/><circle cx="3.800" cy="7.800" r="2.700" fill="#a6a6a6"/></svg>
<svg style="left:416px;top:79px" width="9" height="5" viewBox="0 0 9 5"><path d="M0.700 0.500h7.600l-3.800 3.800z" fill="#fff" stroke="#6e6e6e" stroke-width=".9"/></svg>
<svg style="left:432px;top:79px" width="9" height="4" viewBox="0 0 9 4"><rect x="0.500" y="0.500" width="7.500" height="2.600" fill="#fff" stroke="#6e6e6e" stroke-width=".9"/></svg>
<svg style="left:450px;top:79px" width="10" height="9" viewBox="0 0 10 9"><rect x="0.500" y="0.500" width="8.500" height="7.500" fill="#fff" stroke="#6e6e6e" stroke-width=".9"/><path d="M0.500 2h8.500" stroke="#6e6e6e" stroke-width="1"/></svg>
<svg style="left:10.5px;top:104.7px" width="5" height="8" viewBox="0 0 5 8"><path d="M0.600 0.500l3 3.300-3 3.300" fill="none" stroke="#a3a3a3" stroke-width="1.400"/></svg>
<svg style="left:22.5px;top:100.8px" width="14" height="14" viewBox="0 0 14 14"><g transform="scale(0.94)"><path d="M1 4.400v-3.400l1.700 2.200 1.700-2.200v3.400" fill="none" stroke="#2b5fad" stroke-width="1.100"/><path d="M12.300 .300v3.800q0 1.500-1.800 1.200" fill="none" stroke="#3a6fc0" stroke-width="1.200"/><path d="M7.800 1.800l.700 1.300 1.300.700-1.300.700-.700 1.300-.700-1.300-1.300-.700 1.300-.700z" fill="#f5cf5a"/><path d="M1.500 5.800h11.500v1.300h-11.500z" fill="#5f8fd8"/><path d="M2.800 7.100h9l-.800 5h-7.400z" fill="#d9e7fa" stroke="#6d93cc" stroke-width=".8"/><path d="M0.2 13.2l2.400-4.600q.300-.500.600 0l2.400 4.600q.200.500-.400.500h-4.600q-.600 0-.400-.500z" fill="#f6c550" stroke="#d49a28" stroke-width=".5"/><path d="M2.9000000000000004 10.0v1.900M2.9000000000000004 12.5v.700" stroke="#5a3d0a" stroke-width=".8"/><rect x="9.0" y="8.2" width="4.200" height="5.200" rx="1.500" fill="#f0ae35" stroke="#c98a1c" stroke-width=".6"/><path d="M10.1 9.899999999999999h2M11.1 9.899999999999999v2.400" stroke="#fbe3ae" stroke-width=".8"/></g></svg>
<span class="t12" style="left:40.5px;top:101.0px;color:#8d8571;font-size:11.500px;transform:scale(.92,.9);transform-origin:0 50%">&gt;</span>
<span class="t12" id="tr0" style="letter-spacing:0.048px;left:50.8px;top:101.1px">oslc4j-client<span class="dec"> [lyo.client master]</span></span>
<svg style="left:9.0px;top:124.60000000000001px" width="8" height="5" viewBox="0 0 8 5"><path d="M0.600 0.500l3.400 3.300 3.400-3.300" fill="none" stroke="#3c3c3c" stroke-width="1.500"/></svg>
<svg style="left:22.5px;top:119.2px" width="14" height="14" viewBox="0 0 14 14"><g transform="scale(0.94)"><path d="M1 4.400v-3.400l1.700 2.200 1.700-2.200v3.400" fill="none" stroke="#2b5fad" stroke-width="1.100"/><path d="M12.300 .300v3.800q0 1.500-1.800 1.200" fill="none" stroke="#3a6fc0" stroke-width="1.200"/><path d="M7.800 1.800l.700 1.300 1.300.700-1.300.700-.700 1.300-.700-1.300-1.300-.700 1.300-.700z" fill="#f5cf5a"/><path d="M1.500 5.800h11.500v1.300h-11.500z" fill="#5f8fd8"/><path d="M2.800 7.100h9l-.800 5h-7.400z" fill="#d9e7fa" stroke="#6d93cc" stroke-width=".8"/><path d="M0.2 13.2l2.400-4.600q.300-.500.600 0l2.400 4.600q.200.500-.400.500h-4.600q-.600 0-.400-.500z" fill="#f6c550" stroke="#d49a28" stroke-width=".5"/><path d="M2.9000000000000004 10.0v1.900M2.9000000000000004 12.5v.700" stroke="#5a3d0a" stroke-width=".8"/><rect x="9.0" y="8.2" width="4.200" height="5.200" rx="1.500" fill="#f0ae35" stroke="#c98a1c" stroke-width=".6"/><path d="M10.1 9.899999999999999h2M11.1 9.899999999999999v2.400" stroke="#fbe3ae" stroke-width=".8"/></g></svg>
<span class="t12" style="left:40.5px;top:119.4px;color:#8d8571;font-size:11.500px;transform:scale(.92,.9);transform-origin:0 50%">&gt;</span>
<span class="t12" id="tr1" style="letter-spacing:0.013px;left:50.8px;top:119.5px">oslc4j-client-samples<span class="dec"> [lyo.client master]</span></span>
<svg style="left:25.0px;top:143.0px" width="8" height="5" viewBox="0 0 8 5"><path d="M0.600 0.500l3.400 3.300 3.400-3.300" fill="none" stroke="#3c3c3c" stroke-width="1.500"/></svg>
<svg style="left:38.5px;top:137.6px" width="14" height="14" viewBox="0 0 14 14"><g transform="scale(0.94)"><path d="M1 4.500h4l1-1.500h6.500v8h-11.500z" fill="#f3d58a" stroke="#b98a32" stroke-width=".9"/><rect x="6" y="1.500" width="6" height="5.500" fill="#c08a4a" stroke="#7d5526" stroke-width=".7"/><path d="M6 3.500h6M6 5.300h6M8 1.500v5.500M10 1.500v5.500" stroke="#f6e3c2" stroke-width=".6"/><path d="M-0.3 13.100000000000001l2.400-4.600q.300-.500.600 0l2.400 4.600q.200.500-.400.500h-4.600q-.600 0-.400-.500z" fill="#f6c550" stroke="#d49a28" stroke-width=".5"/><path d="M2.4000000000000004 9.9v1.900M2.4000000000000004 12.4v.700" stroke="#5a3d0a" stroke-width=".8"/><rect x="8.5" y="8.2" width="4.600" height="5.400" rx="1.500" fill="#f0ae35" stroke="#c98a1c" stroke-width=".6"/><path d="M9.8 9.899999999999999h2M10.8 9.899999999999999v2.500" stroke="#fbe3ae" stroke-width=".8"/></g></svg>
<span class="t12" style="left:56.5px;top:137.8px;color:#8d8571;font-size:11.500px;transform:scale(.92,.9);transform-origin:0 50%">&gt;</span>
<span class="t12" id="tr2" style="letter-spacing:0.055px;left:66.7px;top:137.9px">src/main/java</span>
<svg style="left:41.0px;top:161.39999999999998px" width="8" height="5" viewBox="0 0 8 5"><path d="M0.600 0.500l3.400 3.300 3.400-3.300" fill="none" stroke="#3c3c3c" stroke-width="1.500"/></svg>
<svg style="left:54.5px;top:156.0px" width="14" height="14" viewBox="0 0 14 14"><g transform="scale(0.94)"><rect x="3" y="1" width="9" height="10" fill="#c89a58" stroke="#7d5526" stroke-width=".8"/><path d="M3 4.300h9M3 7.600h9M6 1v10M9 1v10" stroke="#f7e7c8" stroke-width=".8"/><path d="M-0.3 13.100000000000001l2.400-4.600q.300-.500.600 0l2.400 4.600q.200.500-.400.500h-4.600q-.600 0-.400-.500z" fill="#f6c550" stroke="#d49a28" stroke-width=".5"/><path d="M2.4000000000000004 9.9v1.900M2.4000000000000004 12.4v.700" stroke="#5a3d0a" stroke-width=".8"/><rect x="8.5" y="8.2" width="4.600" height="5.400" rx="1.500" fill="#f0ae35" stroke="#c98a1c" stroke-width=".6"/><path d="M9.8 9.899999999999999h2M10.8 9.899999999999999v2.500" stroke="#fbe3ae" stroke-width=".8"/></g></svg>
<span class="t12" style="left:72.5px;top:156.2px;color:#8d8571;font-size:11.500px;transform:scale(.92,.9);transform-origin:0 50%">&gt;</span>
<span class="t12" id="tr3" style="letter-spacing:-0.136px;left:82.6px;top:156.3px">org.eclipse.lyo.client.oslc.samples</span>
<svg style="left:58.6px;top:178.29999999999998px" width="5" height="8" viewBox="0 0 5 8"><path d="M0.600 0.500l3 3.300-3 3.300" fill="none" stroke="#a3a3a3" stroke-width="1.400"/></svg>
<svg style="left:70.5px;top:174.4px" width="14" height="14" viewBox="0 0 14 14"><g transform="scale(0.94)"><path d="M3.300 1.500h5l3 3v8h-8z" fill="#f4f7fc" stroke="#b3953f" stroke-width=".9"/><path d="M8.300 1.500v3h3z" fill="#e6d29a" stroke="#b3953f" stroke-width=".6"/><path d="M8 4.300v4q0 1.900-2.300 1.600" fill="none" stroke="#3f6fb0" stroke-width="1.400"/><path d="M0.3 13.2l2.400-4.600q.300-.500.600 0l2.400 4.600q.200.500-.400.500h-4.600q-.600 0-.400-.500z" fill="#f6c550" stroke="#d49a28" stroke-width=".5"/><path d="M3.0 10.0v1.900M3.0 12.5v.700" stroke="#5a3d0a" stroke-width=".8"/><rect x="9.3" y="8.4" width="4.200" height="5.200" rx="1.500" fill="#f0ae35" stroke="#c98a1c" stroke-width=".6"/><path d="M10.4 10.1h2M11.4 10.1v2.400" stroke="#fbe3ae" stroke-width=".8"/></g></svg>
<span class="t12" id="tr4" style="letter-spacing:-0.339px;left:87.5px;top:174.7px">CMSample.java</span>
<svg style="left:58.6px;top:196.7px" width="5" height="8" viewBox="0 0 5 8"><path d="M0.600 0.500l3 3.300-3 3.300" fill="none" stroke="#a3a3a3" stroke-width="1.400"/></svg>
<svg style="left:70.5px;top:192.8px" width="14" height="14" viewBox="0 0 14 14"><g transform="scale(0.94)"><path d="M3.300 1.500h5l3 3v8h-8z" fill="#f4f7fc" stroke="#b3953f" stroke-width=".9"/><path d="M8.300 1.500v3h3z" fill="#e6d29a" stroke="#b3953f" stroke-width=".6"/><path d="M8 4.300v4q0 1.900-2.300 1.600" fill="none" stroke="#3f6fb0" stroke-width="1.400"/><path d="M0.3 13.2l2.400-4.600q.300-.500.600 0l2.400 4.600q.200.500-.400.500h-4.600q-.600 0-.400-.500z" fill="#f6c550" stroke="#d49a28" stroke-width=".5"/><path d="M3.0 10.0v1.900M3.0 12.5v.700" stroke="#5a3d0a" stroke-width=".8"/><rect x="9.3" y="8.4" width="4.200" height="5.200" rx="1.500" fill="#f0ae35" stroke="#c98a1c" stroke-width=".6"/><path d="M10.4 10.1h2M11.4 10.1v2.400" stroke="#fbe3ae" stroke-width=".8"/></g></svg>
<span class="t12" id="tr5" style="letter-spacing:-0.390px;left:87.5px;top:193.1px">IECMSample.java</span>
<svg style="left:58.6px;top:215.09999999999997px" width="5" height="8" viewBox="0 0 5 8"><path d="M0.600 0.500l3 3.300-3 3.300" fill="none" stroke="#a3a3a3" stroke-width="1.400"/></svg>
<svg style="left:70.5px;top:211.2px" width="14" height="14" viewBox="0 0 14 14"><g transform="scale(0.94)"><path d="M3.300 1.500h5l3 3v8h-8z" fill="#f4f7fc" stroke="#b3953f" stroke-width=".9"/><path d="M8.300 1.500v3h3z" fill="#e6d29a" stroke="#b3953f" stroke-width=".6"/><path d="M8 4.300v4q0 1.900-2.300 1.600" fill="none" stroke="#3f6fb0" stroke-width="1.400"/><path d="M0.3 13.2l2.400-4.600q.300-.500.600 0l2.400 4.600q.200.500-.400.500h-4.600q-.600 0-.400-.500z" fill="#f6c550" stroke="#d49a28" stroke-width=".5"/><path d="M3.0 10.0v1.900M3.0 12.5v.700" stroke="#5a3d0a" stroke-width=".8"/><rect x="9.3" y="8.4" width="4.200" height="5.200" rx="1.500" fill="#f0ae35" stroke="#c98a1c" stroke-width=".6"/><path d="M10.4 10.1h2M11.4 10.1v2.400" stroke="#fbe3ae" stroke-width=".8"/></g></svg>
<span class="t12" id="tr6" style="letter-spacing:-0.307px;left:87.5px;top:211.5px">IEQMSample.java</span>
<div class="abs" style="left:69px;top:226.9px;width:122.200px;height:18.800px;background:#d9d9d9"></div>
<svg style="left:58.6px;top:233.49999999999997px" width="5" height="8" viewBox="0 0 5 8"><path d="M0.600 0.500l3 3.300-3 3.300" fill="none" stroke="#a3a3a3" stroke-width="1.400"/></svg>
<svg style="left:71.5px;top:229.6px" width="14" height="14" viewBox="0 0 14 14"><g transform="scale(0.94)"><path d="M2.300 1.500h5l3 3v8h-8z" fill="#f4f7fc" stroke="#b3953f" stroke-width=".9"/><path d="M7.300 1.500v3h3z" fill="#e6d29a" stroke="#b3953f" stroke-width=".6"/><path d="M7 4.300v4q0 1.900-2.300 1.600" fill="none" stroke="#3f6fb0" stroke-width="1.400"/><rect x="8.3" y="8.4" width="4.200" height="5.200" rx="1.500" fill="#f0ae35" stroke="#c98a1c" stroke-width=".6"/><path d="M9.4 10.1h2M10.4 10.1v2.400" stroke="#fbe3ae" stroke-width=".8"/></g></svg>
<span class="t12" style="left:88px;top:229.8px;color:#2a2a2a;font-size:11.500px;transform:scale(.92,.9);transform-origin:0 50%">&gt;</span>
<span class="t12" id="tr7" style="letter-spacing:-0.350px;left:98.4px;top:229.9px">IERMSample.java</span>
<svg style="left:58.6px;top:251.89999999999998px" width="5" height="8" viewBox="0 0 5 8"><path d="M0.600 0.500l3 3.300-3 3.300" fill="none" stroke="#a3a3a3" stroke-width="1.400"/></svg>
<svg style="left:70.5px;top:248.0px" width="14" height="14" viewBox="0 0 14 14"><g transform="scale(0.94)"><path d="M3.300 1.500h5l3 3v8h-8z" fill="#f4f7fc" stroke="#b3953f" stroke-width=".9"/><path d="M8.300 1.500v3h3z" fill="#e6d29a" stroke="#b3953f" stroke-width=".6"/><path d="M8 4.300v4q0 1.900-2.300 1.600" fill="none" stroke="#3f6fb0" stroke-width="1.400"/><path d="M0.3 13.2l2.400-4.600q.300-.500.600 0l2.400 4.600q.200.500-.400.500h-4.600q-.600 0-.400-.500z" fill="#f6c550" stroke="#d49a28" stroke-width=".5"/><path d="M3.0 10.0v1.900M3.0 12.5v.700" stroke="#5a3d0a" stroke-width=".8"/><rect x="9.3" y="8.4" width="4.200" height="5.200" rx="1.500" fill="#f0ae35" stroke="#c98a1c" stroke-width=".6"/><path d="M10.4 10.1h2M11.4 10.1v2.400" stroke="#fbe3ae" stroke-width=".8"/></g></svg>
<span class="t12" id="tr8" style="letter-spacing:-0.339px;left:87.5px;top:248.3px">RMSample.java</span>
<svg style="left:26.5px;top:270.3px" width="5" height="8" viewBox="0 0 5 8"><path d="M0.600 0.500l3 3.300-3 3.300" fill="none" stroke="#a3a3a3" stroke-width="1.400"/></svg>
<svg style="left:38.5px;top:266.4px" width="14" height="14" viewBox="0 0 14 14"><g transform="scale(0.94)"><path d="M1 4.500h4l1-1.500h6.500v8h-11.500z" fill="#f3d58a" stroke="#b98a32" stroke-width=".9"/><rect x="6" y="1.500" width="6" height="5.500" fill="#c08a4a" stroke="#7d5526" stroke-width=".7"/><path d="M6 3.500h6M6 5.300h6M8 1.500v5.500M10 1.500v5.500" stroke="#f6e3c2" stroke-width=".6"/><rect x="8.5" y="8.2" width="4.600" height="5.400" rx="1.500" fill="#f0ae35" stroke="#c98a1c" stroke-width=".6"/><path d="M9.8 9.899999999999999h2M10.8 9.899999999999999v2.500" stroke="#fbe3ae" stroke-width=".8"/></g></svg>
<span class="t12" id="tr9" style="letter-spacing:-0.071px;left:55.3px;top:266.7px">src/main/resources</span>
<svg style="left:26.5px;top:288.7px" width="5" height="8" viewBox="0 0 5 8"><path d="M0.600 0.500l3 3.300-3 3.300" fill="none" stroke="#a3a3a3" stroke-width="1.400"/></svg>
<svg style="left:38.5px;top:284.8px" width="14" height="14" viewBox="0 0 14 14"><g transform="scale(0.94)"><path d="M1 4.500h4l1-1.500h6.500v8h-11.500z" fill="#a9a386" stroke="#6f6a4f" stroke-width=".9"/><rect x="6" y="1.500" width="6" height="5.500" fill="#3f8c4a" stroke="#27602f" stroke-width=".7"/><path d="M6 3.500h6M6 5.300h6M8 1.500v5.500M10 1.500v5.500" stroke="#cfe8c8" stroke-width=".6"/><rect x="8.5" y="8.2" width="4.600" height="5.400" rx="1.500" fill="#f0ae35" stroke="#c98a1c" stroke-width=".6"/><path d="M9.8 9.899999999999999h2M10.8 9.899999999999999v2.500" stroke="#fbe3ae" stroke-width=".8"/></g></svg>
<span class="t12" id="tr10" style="letter-spacing:0.044px;left:55.3px;top:285.1px">src/test/java</span>
<svg style="left:26.5px;top:307.09999999999997px" width="5" height="8" viewBox="0 0 5 8"><path d="M0.600 0.500l3 3.300-3 3.300" fill="none" stroke="#a3a3a3" stroke-width="1.400"/></svg>
<svg style="left:38.5px;top:303.2px" width="14" height="14" viewBox="0 0 14 14"><g transform="scale(0.94)"><path d="M1 4.500h4l1-1.500h6.500v8h-11.500z" fill="#a9a386" stroke="#6f6a4f" stroke-width=".9"/><rect x="6" y="1.500" width="6" height="5.500" fill="#3f8c4a" stroke="#27602f" stroke-width=".7"/><path d="M6 3.500h6M6 5.300h6M8 1.500v5.500M10 1.500v5.500" stroke="#cfe8c8" stroke-width=".6"/><rect x="8.5" y="8.2" width="4.600" height="5.400" rx="1.500" fill="#f0ae35" stroke="#c98a1c" stroke-width=".6"/><path d="M9.8 9.899999999999999h2M10.8 9.899999999999999v2.500" stroke="#fbe3ae" stroke-width=".8"/></g></svg>
<span class="t12" id="tr11" style="letter-spacing:-0.111px;left:55.3px;top:303.5px">src/test/resources</span>
<svg style="left:26.5px;top:325.49999999999994px" width="5" height="8" viewBox="0 0 5 8"><path d="M0.600 0.500l3 3.300-3 3.300" fill="none" stroke="#a3a3a3" stroke-width="1.400"/></svg>
<svg style="left:38.5px;top:321.6px" width="14" height="14" viewBox="0 0 14 14"><g transform="scale(0.94)"><rect x="0" y="2.500" width="8" height="2.300" fill="#2a86b4"/><rect x="0" y="5.500" width="8" height="2.300" fill="#4c9a6a"/><rect x="0" y="8.500" width="8" height="2.300" fill="#d0743a"/><path d="M8.500 11l2-8.500 2.800 8.500z" fill="#f0c25a" stroke="#a87a22" stroke-width=".7"/><rect x="0" y="11" width="13.500" height="1" fill="#7a6a3a"/></g></svg>
<span class="t12" id="tr12" style="letter-spacing:-0.473px;left:55.3px;top:321.9px">JRE System Library<span class="dec"> [JavaSE-1.8]</span></span>
<svg style="left:26.5px;top:343.9px" width="5" height="8" viewBox="0 0 5 8"><path d="M0.600 0.500l3 3.300-3 3.300" fill="none" stroke="#a3a3a3" stroke-width="1.400"/></svg>
<svg style="left:38.5px;top:340.0px" width="14" height="14" viewBox="0 0 14 14"><g transform="scale(0.94)"><rect x="0" y="2.500" width="8" height="2.300" fill="#2a86b4"/><rect x="0" y="5.500" width="8" height="2.300" fill="#4c9a6a"/><rect x="0" y="8.500" width="8" height="2.300" fill="#d0743a"/><path d="M8.500 11l2-8.500 2.800 8.500z" fill="#f0c25a" stroke="#a87a22" stroke-width=".7"/><rect x="0" y="11" width="13.500" height="1" fill="#7a6a3a"/></g></svg>
<span class="t12" id="tr13" style="letter-spacing:-0.138px;left:55.3px;top:340.3px">Maven Dependencies</span>
<svg style="left:26.5px;top:362.29999999999995px" width="5" height="8" viewBox="0 0 5 8"><path d="M0.600 0.500l3 3.300-3 3.300" fill="none" stroke="#a3a3a3" stroke-width="1.400"/></svg>
<svg style="left:38.5px;top:358.4px" width="14" height="14" viewBox="0 0 14 14"><g transform="scale(0.94)"><path d="M0.800 3.500h4l1-1.500h5v2.500h-7l-3 7z" fill="#f6d78b" stroke="#b98a32" stroke-width=".9"/><path d="M3.500 5h10l-2.800 7h-10z" fill="#fbe9b5" stroke="#b98a32" stroke-width=".9"/><rect x="9.0" y="8.2" width="4.600" height="5.400" rx="1.500" fill="#f0ae35" stroke="#c98a1c" stroke-width=".6"/><path d="M10.3 9.899999999999999h2M11.3 9.899999999999999v2.500" stroke="#fbe3ae" stroke-width=".8"/></g></svg>
<span class="t12" id="tr14" style="letter-spacing:-0.194px;left:55.3px;top:358.7px">license</span>
<svg style="left:26.5px;top:380.7px" width="5" height="8" viewBox="0 0 5 8"><path d="M0.600 0.500l3 3.300-3 3.300" fill="none" stroke="#a3a3a3" stroke-width="1.400"/></svg>
<svg style="left:38.5px;top:376.8px" width="14" height="14" viewBox="0 0 14 14"><g transform="scale(0.94)"><path d="M0.800 3.500h4l1-1.500h5v2.500h-7l-3 7z" fill="#f6d78b" stroke="#b98a32" stroke-width=".9"/><path d="M3.500 5h10l-2.800 7h-10z" fill="#fbe9b5" stroke="#b98a32" stroke-width=".9"/><path d="M-0.3 13.100000000000001l2.400-4.600q.300-.500.600 0l2.400 4.600q.200.500-.400.500h-4.600q-.600 0-.400-.500z" fill="#f6c550" stroke="#d49a28" stroke-width=".5"/><path d="M2.4000000000000004 9.9v1.900M2.4000000000000004 12.4v.700" stroke="#5a3d0a" stroke-width=".8"/><rect x="9.0" y="8.2" width="4.600" height="5.400" rx="1.500" fill="#f0ae35" stroke="#c98a1c" stroke-width=".6"/><path d="M10.3 9.899999999999999h2M11.3 9.899999999999999v2.500" stroke="#fbe3ae" stroke-width=".8"/></g></svg>
<span class="t12" style="left:56.5px;top:377.0px;color:#8d8571;font-size:11.500px;transform:scale(.92,.9);transform-origin:0 50%">&gt;</span>
<span class="t12" id="tr15" style="letter-spacing:-0.600px;left:66.7px;top:377.1px">src</span>
<svg style="left:26.5px;top:399.09999999999997px" width="5" height="8" viewBox="0 0 5 8"><path d="M0.600 0.500l3 3.300-3 3.300" fill="none" stroke="#a3a3a3" stroke-width="1.400"/></svg>
<svg style="left:38.5px;top:395.2px" width="14" height="14" viewBox="0 0 14 14"><g transform="scale(0.94)"><path d="M0.800 3.500h4l1-1.500h5v2.500h-7l-3 7z" fill="#f6d78b" stroke="#b98a32" stroke-width=".9"/><path d="M3.500 5h10l-2.800 7h-10z" fill="#fbe9b5" stroke="#b98a32" stroke-width=".9"/></g></svg>
<span class="t12" id="tr16" style="letter-spacing:0.252px;left:55.3px;top:395.5px">target</span>
<svg style="left:39.5px;top:413.6px" width="14" height="14" viewBox="0 0 14 14"><g transform="scale(0.94)"><path d="M1.500 0.800h6l3 3v9.400h-9z" fill="#fffefb" stroke="#b49a72" stroke-width=".9"/><path d="M3 4.500h4M3 6.500h5M3 8.500h3" stroke="#c86a6a" stroke-width=".8"/><path d="M3 5.500h3M3 7.500h4" stroke="#6a8ac8" stroke-width=".8"/><rect x="7.5" y="8.5" width="4.600" height="5.400" rx="1.500" fill="#f0ae35" stroke="#c98a1c" stroke-width=".6"/><path d="M8.8 10.2h2M9.8 10.2v2.500" stroke="#fbe3ae" stroke-width=".8"/></g></svg>
<span class="t12" id="tr17" style="letter-spacing:0.115px;left:55.3px;top:413.9px">about.html</span>
<svg style="left:39.5px;top:432.0px" width="14" height="14" viewBox="0 0 14 14"><g transform="scale(0.94)"><path d="M1.500 0.800h6l3 3v9.400h-9z" fill="#fffefb" stroke="#8a8fa0" stroke-width=".9"/><text x="2.500" y="10" font-family="Liberation Sans" font-weight="bold" font-size="6.500" fill="#2f63b3">M</text><rect x="7.5" y="8.5" width="4.600" height="5.400" rx="1.500" fill="#f0ae35" stroke="#c98a1c" stroke-width=".6"/><path d="M8.8 10.2h2M9.8 10.2v2.500" stroke="#fbe3ae" stroke-width=".8"/></g></svg>
<span class="t12" id="tr18" style="letter-spacing:0.122px;left:55.3px;top:432.3px">pom.xml</span>
<div class="abs" style="left:474px;top:73.500px;width:1015px;height:1040px;background:#fff;border-radius:5px 5px 0 0;"></div>
<div class="abs" style="left:474px;top:73.500px;width:1015px;height:23.500px;background:#f5f6fb;border-radius:5px 0 0 0;"></div>
<div class="abs" style="left:474px;top:73.500px;width:100px;height:23.500px;background:linear-gradient(#d5e1ed,#e6edf4 30%,#f6f9fb 65%,#fff 95%);border-radius:5px 0 0 0;"></div>
<svg style="left:480px;top:80px" width="10" height="12" viewBox="0 0 10 12"><path d="M0.500 0.500h5.300l2.700 2.700v7.300h-8z" fill="#f7f9fd" stroke="#b3953f" stroke-width="1"/><path d="M5.800 0.500v2.700h2.700z" fill="#d9bd6a"/><path d="M5.300 2.800v4.200q0 1.800-2.300 1.600" fill="none" stroke="#4a7bb5" stroke-width="1.500"/></svg>
<span class="t12" id="edtab" style="letter-spacing:-0.310px;left:493px;top:79.700px;color:#1c1c1c">IERMSample.java</span>
<div class="abs" style="left:476.300px;top:98px;width:9.700px;height:1010px;background:#f8f8f8"></div>
<div class="abs" style="left:486px;top:98px;width:28.500px;height:1010px;background:#fcfcfc"></div>
<div class="abs" style="left:1457px;top:393px;width:16px;height:720px;background:#f0f0f0"></div>
<div class="abs" style="left:1457px;top:965px;width:15px;height:139px;background:#cdcdcd"></div>
<div class="abs" style="left:1473px;top:393px;width:11.500px;height:720px;background:#f8f8f8"></div>
<div class="abs" style="left:1486px;top:393px;width:3px;height:720px;background:#e1e6f6"></div>
<div class="abs" style="left:1489px;top:393px;width:260px;height:720px;background:#fff"></div>
<span class="ln mono lnum" style="left:486px;top:98.5px">451</span>
<span class="ln mono lnum" style="left:486px;top:114.5px">452</span>
<span class="ln mono lnum" style="left:486px;top:130.5px">453</span>
<span class="ln mono" id="L453" style="left:545.6px;top:130.5px">}</span>
<span class="ln mono lnum" style="left:486px;top:146.5px">454</span>
<span class="ln mono lnum" style="left:486px;top:162.5px">455</span>
<svg style="left:507.3px;top:164.6px" width="8" height="8" viewBox="0 0 8 8"><circle cx="3.800" cy="3.800" r="3.600" fill="#d6dee8"/><path d="M1.700 3.800h4.200" stroke="#55657d" stroke-width="1.100"/></svg>
<span class="ln mono" id="L455" style="left:545.6px;top:162.5px"><span class="kw">pri</span></span>
<span class="ln mono lnum" style="left:486px;top:178.5px">456</span>
<span class="ln mono lnum" style="left:486px;top:194.5px">457</span>
<span class="ln mono lnum" style="left:486px;top:210.5px">458</span>
<span class="ln mono lnum" style="left:486px;top:226.5px">459</span>
<span class="ln mono lnum" style="left:486px;top:242.5px">460</span>
<span class="ln mono lnum" style="left:486px;top:258.5px">461</span>
<span class="ln mono lnum" style="left:486px;top:274.5px">462</span>
<span class="ln mono lnum" style="left:486px;top:290.5px">463</span>
<span class="ln mono lnum" style="left:486px;top:306.5px">464</span>
<span class="ln mono lnum" style="left:486px;top:322.5px">465</span>
<span class="ln mono lnum" style="left:486px;top:338.5px">466</span>
<span class="ln mono lnum" style="left:486px;top:354.5px">467</span>
<span class="ln mono lnum" style="left:486px;top:370.5px">468</span>
<span class="ln mono lnum" style="left:486px;top:386.5px">469</span>
<span class="ln mono" id="L469" style="left:711.2px;top:386.5px"><span class="cm">//Requirement </span><span class="cm">req</span><span class="cm"> = response.readEntity(Requirement.class);</span></span>
<span class="ln mono lnum" style="left:486px;top:402.5px">470</span>
<span class="ln mono" id="L470" style="left:711.2px;top:402.5px"><span class="cm">//printRequirementInfo(</span><span class="cm">req</span><span class="cm">);   //print a few attributes</span></span>
<span class="ln mono lnum" style="left:486px;top:418.5px">471</span>
<span class="ln mono" id="L471" style="left:660.8px;top:418.5px">} <span class="kw">else</span> {</span>
<span class="ln mono lnum" style="left:486px;top:434.5px">472</span>
<span class="ln mono lnum" style="left:486px;top:450.5px">473</span>
<span class="ln mono" id="L473" style="left:689.6px;top:450.5px"><span class="cm">//Just print the raw RDF/XML (or process the XML as desired)</span></span>
<span class="ln mono lnum" style="left:486px;top:466.5px">474</span>
<span class="ln mono" id="L474" style="left:689.6px;top:466.5px"><span class="it">processRawResponse</span>(<span class="lv">response</span>);</span>
<span class="ln mono lnum" style="left:486px;top:482.5px">475</span>
<span class="ln mono lnum" style="left:486px;top:498.5px">476</span>
<span class="ln mono" id="L476" style="left:660.8px;top:498.5px">}</span>
<span class="ln mono lnum" style="left:486px;top:514.5px">477</span>
<span class="ln mono" id="L477" style="left:632.0px;top:514.5px">}</span>
<span class="ln mono lnum" style="left:486px;top:530.5px">478</span>
<span class="ln mono" id="L478" style="left:603.2px;top:530.5px">} <span class="kw">catch</span> (Exception <span class="lv">e</span>) {</span>
<span class="ln mono lnum" style="left:486px;top:546.5px">479</span>
<span class="ln mono" id="L479" style="left:632.0px;top:546.5px"><span class="sf">logger</span>.log(Level.<span class="sf">SEVERE</span>, <span class="st">"Unable to process artfiact at url: "</span> + <span class="lv">resultsUrl</span>, <span class="lv">e</span>);</span>
<span class="ln mono lnum" style="left:486px;top:562.5px">480</span>
<span class="ln mono" id="L480" style="left:603.2px;top:562.5px">}</span>
<span class="ln mono lnum" style="left:486px;top:578.5px">481</span>
<span class="ln mono lnum" style="left:486px;top:594.5px">482</span>
<span class="ln mono" id="L482" style="left:574.4px;top:594.5px">}</span>
<span class="ln mono lnum" style="left:486px;top:610.5px">483</span>
<span class="ln mono lnum" style="left:486px;top:626.5px">484</span>
<span class="ln mono" id="L484" style="left:545.6px;top:626.5px">}</span>
<span class="ln mono lnum" style="left:486px;top:642.5px">485</span>
<span class="ln mono lnum" style="left:486px;top:658.5px">486</span>
<svg style="left:507.3px;top:660.6px" width="8" height="8" viewBox="0 0 8 8"><circle cx="3.800" cy="3.800" r="3.600" fill="#d6dee8"/><path d="M1.700 3.800h4.200" stroke="#55657d" stroke-width="1.100"/></svg>
<span class="ln mono" id="L486" style="left:545.6px;top:658.5px"><span class="kw">private</span> <span class="kw">static</span> <span class="kw">void</span> processRawResponse(Response <span class="lv">response</span>) <span class="kw">throws</span> IOException {</span>
<span class="ln mono lnum" style="left:486px;top:674.5px">487</span>
<span class="ln mono" id="L487" style="left:574.4px;top:674.5px">InputStream <span class="lv">is</span> = <span class="lv">response</span>.readEntity(InputStream.<span class="kw">class</span>);</span>
<span class="ln mono lnum" style="left:486px;top:690.5px">488</span>
<span class="ln mono" id="L488" style="left:574.4px;top:690.5px">BufferedReader <span class="lv">in</span> = <span class="kw">new</span> BufferedReader(<span class="kw">new</span> InputStreamReader(<span class="lv">is</span>));</span>
<span class="ln mono lnum" style="left:486px;top:706.5px">489</span>
<span class="ln mono lnum" style="left:486px;top:722.5px">490</span>
<span class="ln mono" id="L490" style="left:574.4px;top:722.5px">String <span class="lv">line</span> = <span class="kw">null</span>;</span>
<span class="ln mono lnum" style="left:486px;top:738.5px">491</span>
<span class="ln mono" id="L491" style="left:574.4px;top:738.5px"><span class="kw">while</span>((<span class="lv">line</span> = <span class="lv">in</span>.readLine()) != <span class="kw">null</span>) {</span>
<span class="ln mono lnum" style="left:486px;top:754.5px">492</span>
<span class="ln mono" id="L492" style="left:588.8px;top:754.5px">System.<span class="sf">out</span>.println(<span class="lv">line</span>);</span>
<span class="ln mono lnum" style="left:486px;top:770.5px">493</span>
<span class="ln mono" id="L493" style="left:574.4px;top:770.5px">}</span>
<span class="ln mono lnum" style="left:486px;top:786.5px">494</span>
<span class="ln mono" id="L494" style="left:574.4px;top:786.5px">System.<span class="sf">out</span>.println();</span>
<span class="ln mono lnum" style="left:486px;top:802.5px">495</span>
<span class="ln mono" id="L495" style="left:574.4px;top:802.5px"><span class="lv">response</span>.readEntity(String.<span class="kw">class</span>);</span>
<span class="ln mono lnum" style="left:486px;top:818.5px">496</span>
<span class="ln mono" id="L496" style="left:545.6px;top:818.5px">}</span>
<span class="ln mono lnum" style="left:486px;top:834.5px">497</span>
<span class="ln mono lnum" style="left:486px;top:850.5px">498</span>
<span class="ln mono lnum" style="left:486px;top:866.5px">499</span>
<svg style="left:507.3px;top:868.6px" width="8" height="8" viewBox="0 0 8 8"><circle cx="3.800" cy="3.800" r="3.600" fill="#d6dee8"/><path d="M1.700 3.800h4.200" stroke="#55657d" stroke-width="1.100"/></svg>
<span class="ln mono" id="L499" style="left:545.6px;top:866.5px"><span class="kw">private</span> <span class="kw">static</span> <span class="kw">boolean</span> validateOptions(CommandLine <span class="lv">cmd</span>) {</span>
<span class="ln mono lnum" style="left:486px;top:882.5px">500</span>
<span class="ln mono" id="L500" style="left:574.4px;top:882.5px"><span class="kw">boolean</span> <span class="lv">isValid</span> = <span class="kw">true</span>;</span>
<span class="ln mono lnum" style="left:486px;top:898.5px">501</span>
<span class="ln mono lnum" style="left:486px;top:914.5px">502</span>
<span class="ln mono" id="L502" style="left:574.4px;top:914.5px"><span class="kw">if</span> (! (<span class="lv">cmd</span>.hasOption(<span class="st">"url"</span>) &amp;&amp;</span>
<span class="ln mono lnum" style="left:486px;top:930.5px">503</span>
<span class="ln mono" id="L503" style="left:624.8px;top:930.5px"><span class="lv">cmd</span>.hasOption(<span class="st">"user"</span>) &amp;&amp;</span>
<span class="ln mono lnum" style="left:486px;top:946.5px">504</span>
<span class="ln mono" id="L504" style="left:624.8px;top:946.5px"><span class="lv">cmd</span>.hasOption(<span class="st">"password"</span>) &amp;&amp;</span>
<span class="ln mono lnum" style="left:486px;top:962.5px">505</span>
<span class="ln mono" id="L505" style="left:624.8px;top:962.5px"><span class="lv">cmd</span>.hasOption(<span class="st">"project"</span>))) {</span>
<span class="ln mono lnum" style="left:486px;top:978.5px">506</span>
<span class="ln mono lnum" style="left:486px;top:994.5px">507</span>
<span class="ln mono" id="L507" style="left:603.2px;top:994.5px"><span class="lv">isValid</span> = <span class="kw">false</span>;</span>
<span class="ln mono lnum" style="left:486px;top:1010.5px">508</span>
<span class="ln mono" id="L508" style="left:574.4px;top:1010.5px">}</span>
<span class="ln mono lnum" style="left:486px;top:1026.5px">509</span>
<span class="ln mono" id="L509" style="left:574.4px;top:1026.5px">System.<span class="sf">out</span>.println(<span class="lv">isValid</span>);</span>
<span class="ln mono lnum" style="left:486px;top:1042.5px">510</span>
<span class="ln mono" id="L510" style="left:574.4px;top:1042.5px"><span class="kw">return</span> <span class="lv">isValid</span>;</span>
<span class="ln mono lnum" style="left:486px;top:1058.5px">511</span>
<span class="ln mono" id="L511" style="left:545.6px;top:1058.5px">}</span>
<span class="ln mono lnum" style="left:486px;top:1074.5px">512</span>
<span class="ln mono lnum" style="left:486px;top:1090.5px">513</span>
<span class="ln mono" id="L513" style="left:516.8px;top:1090.5px">}</span>
<svg style="left:812.3px;top:398.0px" width="23" height="4" viewBox="0 0 23 4"><path d="M0 2.500l1.600-1.900 1.600 1.900l1.600-1.900 1.600 1.900l1.600-1.900 1.600 1.900l1.600-1.900 1.600 1.900l1.600-1.900 1.600 1.900l1.600-1.900 1.600 1.900l1.600-1.900 1.600 1.900" fill="none" stroke="#f2a283" stroke-width=".95"/></svg>
<svg style="left:877.1px;top:414.0px" width="23" height="4" viewBox="0 0 23 4"><path d="M0 2.500l1.600-1.900 1.600 1.900l1.600-1.900 1.600 1.900l1.600-1.900 1.600 1.900l1.600-1.900 1.600 1.900l1.600-1.900 1.600 1.900l1.600-1.900 1.600 1.900l1.600-1.900 1.600 1.900" fill="none" stroke="#f2a283" stroke-width=".95"/></svg>
<div class="abs" style="left:564px;top:70px;width:1190px;height:323px;background:#e1e6f6;border-radius:0 0 0 3px"></div>
<div class="abs" style="left:567px;top:73px;width:1190px;height:317px;background:#fff;border:1px solid #cdd0db;border-top:none;border-radius:6px 0 0 6px;box-sizing:border-box"></div>
<div class="abs" style="left:567px;top:73px;width:1190px;height:24px;background:linear-gradient(#d2e1f0,#cfdeee 45%,#ccdbeb);border-radius:6px 0 0 0;border-bottom:1px solid #bfc8d6;border-top:1px solid #cacdd8;box-sizing:border-box"></div>
<div class="abs" style="left:979.500px;top:73.500px;width:80px;height:24px;background:#fff;border-radius:6px 6px 0 0;"></div>
<svg style="left:571px;top:80px" width="13" height="13" viewBox="0 0 13 13"><g transform="scale(0.93)"><path d="M0.500 0.500h10.500l-1 3 1 3-1 5h-9.500z" fill="#eef3fa" stroke="#8d97a8" stroke-width=".8"/><circle cx="4.500" cy="3" r="2.300" fill="#e2312b"/><path d="M2.500 11.500c0-3 4-3 4.500 0z" fill="#f5b32e" stroke="#c58a1e" stroke-width=".4"/><path d="M7.500 2.500h2.500M7.500 5h2" stroke="#9db8dd" stroke-width=".8"/></g></svg>
<span class="t12" id="tab_markers" style="letter-spacing:-0.335px;left:587.5px;top:79.800px;color:#1c1c1c">Markers</span>
<svg style="left:638px;top:80px" width="13" height="13" viewBox="0 0 13 13"><g transform="scale(0.93)"><rect x="0.600" y="0.600" width="11" height="9.800" fill="#fbfcfe" stroke="#6f7b93" stroke-width="1"/><rect x="1" y="1" width="10.200" height="1.800" fill="#7f8db0"/><path d="M3.500 3v7M1 5h10M1 7.300h10" stroke="#c5cbd8" stroke-width=".7"/></g></svg>
<span class="t12" id="tab_props" style="letter-spacing:-0.100px;left:652.5px;top:79.800px;color:#1c1c1c">Properties</span>
<svg style="left:715px;top:80px" width="13" height="13" viewBox="0 0 13 13"><g transform="scale(0.93)"><path d="M2.500 1v10M6 1v10M9.500 1v10" stroke="#6d7686" stroke-width="1"/><rect x="1.200" y="6" width="2.600" height="2.600" fill="#e8a33a" stroke="#a66f1b" stroke-width=".5"/><rect x="4.700" y="2.500" width="2.600" height="2.600" fill="#5a9bd8" stroke="#2f69a8" stroke-width=".5"/><rect x="8.200" y="5" width="2.600" height="2.600" fill="#64b35b" stroke="#36803a" stroke-width=".5"/></g></svg>
<span class="t12" id="tab_servers" style="letter-spacing:-0.521px;left:730px;top:79.800px;color:#1c1c1c">Servers</span>
<svg style="left:776px;top:80px" width="13" height="13" viewBox="0 0 13 13"><g transform="scale(0.93)"><path d="M0.500 2l4-1.500 4 1.500 4-1.500v10l-4 1.500-4-1.500-4 1.500z" fill="#7fbf55" stroke="#3f7a2a" stroke-width=".9"/><path d="M4.500 0.500v10M8.500 2v10" stroke="#3f7a2a" stroke-width=".8"/><rect x="1.500" y="4" width="2" height="3" fill="#f1d04f"/><rect x="5.500" y="3" width="2" height="5" fill="#e9f4d8"/><rect x="9.500" y="4" width="2" height="4" fill="#f1d04f"/></g></svg>
<span class="t12" id="tab_dse" style="letter-spacing:-0.147px;left:792px;top:79.800px;color:#1c1c1c">Data Source Explorer</span>
<svg style="left:913px;top:80px" width="13" height="13" viewBox="0 0 13 13"><g transform="scale(0.93)"><rect x="0.600" y="2.600" width="11" height="8.800" fill="#fbfcfe" stroke="#8aa2c8" stroke-width=".9"/><path d="M2.500 7h4M2.500 9h6" stroke="#5f86c4" stroke-width=".9"/><path d="M2 0.500l3 3M5 0.500l-3 3" stroke="#d05a4a" stroke-width=".9"/><circle cx="8.500" cy="5" r="1.200" fill="#d05a4a"/></g></svg>
<span class="t12" id="tab_snip" style="letter-spacing:-0.125px;left:928px;top:79.800px;color:#1c1c1c">Snippets</span>
<svg style="left:983px;top:80px" width="13" height="13" viewBox="0 0 13 13"><g transform="scale(0.93)"><rect x="0.800" y="0.800" width="10.400" height="8" rx="1.300" fill="#f3f7fc" stroke="#2d5ea8" stroke-width="1.500"/><path d="M3 3.500h4M3 5.500h5.500" stroke="#7c9fd4" stroke-width=".9"/><rect x="3" y="10" width="6" height="1.300" fill="#2d5ea8"/></g></svg>
<span class="t12" id="tab_console" style="letter-spacing:-0.290px;left:997px;top:79.800px;color:#1c1c1c">Console</span>
<svg style="left:1063px;top:80px" width="13" height="13" viewBox="0 0 13 13"><g transform="scale(0.93)"><path d="M0.500 12l2.800-2.800 1.900 1.900-2.800 2.300z" fill="#fbe7a6" stroke="#e0b64e" stroke-width=".6"/><path d="M2.800 9l4.200-4.700 2.800 2.600-4.700 4.200z" fill="#a9a39a" stroke="#7c756b" stroke-width=".8"/><path d="M6.500 4.200l3.300-3.300 2.800 2.800-3.300 3.300z" fill="#f3b54a" stroke="#b9822a" stroke-width=".8"/><path d="M8.900 2.300l2.300 2.300" stroke="#fbe2a0" stroke-width="1"/></g></svg>
<span class="t12" id="tab_search" style="letter-spacing:-0.439px;left:1079px;top:79.800px;color:#1c1c1c">Search</span>
<svg style="left:1126px;top:80px" width="13" height="13" viewBox="0 0 13 13"><g transform="scale(0.93)"><path d="M1 0.500v10M1 3h2.500M1 8h2.500" stroke="#6b6b6b" stroke-width="1"/><rect x="3.500" y="1" width="4" height="3.600" fill="#c9682a" stroke="#8a4315" stroke-width=".5"/><rect x="3.500" y="6.200" width="4" height="3.600" fill="#c9682a" stroke="#8a4315" stroke-width=".5"/></g></svg>
<span class="t12" id="tab_pkgexp" style="letter-spacing:-0.232px;left:1138px;top:79.800px;color:#1c1c1c">Package Explorer</span>
<svg style="left:1045.5px;top:81px" width="9" height="9" viewBox="0 0 9 9"><path d="M1.400 .300L4.250 3.150 7.100 .300 8.200 1.400 5.350 4.250 8.200 7.100 7.100 8.200 4.250 5.350 1.400 8.200 .300 7.100 3.150 4.250 .300 1.400z" fill="#fff" stroke="#858585" stroke-width=".9" stroke-linejoin="round"/></svg>
<svg style="left:1627px;top:79px" width="10" height="10" viewBox="0 0 10 10"><rect x="0.800" y="0.800" width="8.400" height="8.400" fill="#a9a9a9" stroke="#d9d9d9" stroke-width="1.400"/></svg>
<svg style="left:1645px;top:78px" width="12" height="12" viewBox="0 0 12 12"><path d="M2 2l8 8M10 2l-8 8" stroke="#666" stroke-width="2.800" stroke-linecap="round"/></svg>
<svg style="left:1663px;top:77px" width="14" height="14" viewBox="0 0 14 14"><path d="M1.500 1.500l7 7M8.500 1.500l-7 7" stroke="#8c8c8c" stroke-width="2.300"/><path d="M1.500 1.500l7 7M8.500 1.500l-7 7" stroke="#e4e4e4" stroke-width=".8"/><path d="M5.500 5.500l7 7M12.500 5.500l-7 7" stroke="#666" stroke-width="2.600" stroke-linecap="round"/></svg>
<div class="abs" style="left:1680px;top:76px;width:1px;height:15px;background:#8f9198"></div>
<svg style="left:1688px;top:78px" width="13" height="13" viewBox="0 0 13 13"><path d="M0.500 0.500h6l2 2v8h-8z" fill="#fbfbf6" stroke="#b7ad8a" stroke-width=".8"/><path d="M2 3.500h4M2 5.500h4M2 7.500h3" stroke="#8aa6d6" stroke-width=".7"/><path d="M7 7.500l5 5M12 7.500l-5 5" stroke="#7a7a7a" stroke-width="1.800"/></svg>
<svg style="left:1706px;top:78px" width="14" height="13" viewBox="0 0 14 13"><rect x="0.500" y="0.500" width="12.500" height="10.500" fill="#f7faff" stroke="#8aa6d6" stroke-width=".9"/><rect x="1" y="1" width="11.500" height="1.800" fill="#6f94cf"/><path d="M11 4v6" stroke="#8aa6d6" stroke-width="1.500"/><rect x="0" y="7" width="6.500" height="5.500" rx="1" fill="#e9b730" stroke="#a87a12" stroke-width=".7"/><path d="M1.500 7v-1.500a1.800 1.800 0 013.600 0v1.500" fill="none" stroke="#a87a12" stroke-width="1"/></svg>
<svg style="left:1725px;top:78px" width="13" height="13" viewBox="0 0 13 13"><path d="M0.500 0.500h7l2 2v8h-9z" fill="#fbfbf6" stroke="#b7ad8a" stroke-width=".8"/><path d="M2 3.500h4M2 5.500h4M2 7.500h3" stroke="#8aa6d6" stroke-width=".7"/><path d="M12 4.500v4h-5" fill="none" stroke="#d9a536" stroke-width="1.600"/><path d="M7.500 6l-3 2.500 3 2.500z" fill="#e9b730" stroke="#a87a12" stroke-width=".5"/></svg>
<div class="abs" style="left:1740px;top:74.300px;width:10px;height:17px;background:#a9cdf3;border:1px solid #86bdf2;box-sizing:border-box"></div>
<div class="abs" style="left:1743px;top:81px;width:4px;height:6px;background:#3d5f8f"></div>
<span class="t12" id="cdA" style="letter-spacing:0.107px;left:570.6px;top:99.900px">&lt;terminated&gt;</span>
<span class="t12" id="cdB" style="letter-spacing:-0.289px;left:646.7px;top:99.900px">IERMSample</span>
<span class="t12" id="cdC" style="letter-spacing:0.044px;left:718.2px;top:99.900px">[Java Application]</span>
<span class="t12" id="cdD" style="letter-spacing:-0.107px;left:815.3px;top:99.900px">C:\Program Files\Java\jdk1.8.0_202\bin\javaw.exe</span>
<span class="t12" id="cdE" style="letter-spacing:-0.375px;left:1080.3px;top:99.900px">(Mar 18, 2019, 6:49:02 PM)</span>
<div class="abs" style="left:570px;top:114px;width:1180px;height:1px;background:#9a9a9a"></div>
<span class="ln mono" id="C0" style="left:570.8px;top:118.0px">true</span>
<span class="ln mono" id="C1" style="left:570.8px;top:134.0px"><span class="err">Exception in thread "main" java.lang.NoSuchMethodError: org.apache.jena.system.JenaSystem.logLifecycle(Ljava/lang/String;[Ljava/lang/Object;)V</span></span>
<span class="ln mono" id="C2" style="left:628.4px;top:150.0px"><span class="err">at org.apache.jena.riot.RIOT.init(</span><span class="lk">RIOT.java:69</span><span class="err">)</span></span>
<span class="ln mono" id="C3" style="left:628.4px;top:166.0px"><span class="err">at org.apache.jena.riot.system.InitRIOT.start(</span><span class="lk">InitRIOT.java:29</span><span class="err">)</span></span>
<span class="ln mono" id="C4" style="left:628.4px;top:182.0px"><span class="err">at org.apache.jena.system.JenaSystem.lambda$init$40(</span><span class="lk">JenaSystem.java:114</span><span class="err">)</span></span>
<span class="ln mono" id="C5" style="left:628.4px;top:198.0px"><span class="err">at java.util.ArrayList.forEach(</span><span class="lk">ArrayList.java:1257</span><span class="err">)</span></span>
<span class="ln mono" id="C6" style="left:628.4px;top:214.0px"><span class="err">at org.apache.jena.system.JenaSystem.forEach(</span><span class="lk">JenaSystem.java:179</span><span class="err">)</span></span>
<span class="ln mono" id="C7" style="left:628.4px;top:230.0px"><span class="err">at org.apache.jena.system.JenaSystem.forEach(</span><span class="lk">JenaSystem.java:156</span><span class="err">)</span></span>
<span class="ln mono" id="C8" style="left:628.4px;top:246.0px"><span class="err">at org.apache.jena.system.JenaSystem.init(</span><span class="lk">JenaSystem.java:111</span><span class="err">)</span></span>
<span class="ln mono" id="C9" style="left:628.4px;top:262.0px"><span class="err">at org.apache.jena.rdf.model.ModelFactory.&lt;clinit&gt;(</span><span class="lk">ModelFactory.java:49</span><span class="err">)</span></span>
<span class="ln mono" id="C10" style="left:628.4px;top:278.0px"><span class="err">at org.eclipse.lyo.client.oslc.OslcClient.getCatalogUrl(</span><span class="lk">OslcClient.java:590</span><span class="err">)</span></span>
<span class="ln mono" id="C11" style="left:628.4px;top:294.0px"><span class="err">at org.eclipse.lyo.client.oslc.samples.IERMSample.main(</span><span class="lk">IERMSample.java:140</span><span class="err">)</span></span>
<div class="abs" style="left:1147px;top:261px;width:1px;height:15px;background:#333"></div>
<div class="abs" style="left:570px;top:371px;width:1180px;height:16px;background:#f0f0f0"></div>
<svg style="left:574.5px;top:375px" width="6" height="8" viewBox="0 0 6 8"><path d="M5.200 0.500l-4 3.500 4 3.500" fill="none" stroke="#c2c2c2" stroke-width="1.700"/></svg>
</div><div id="lborder"></div>
</body></html>
